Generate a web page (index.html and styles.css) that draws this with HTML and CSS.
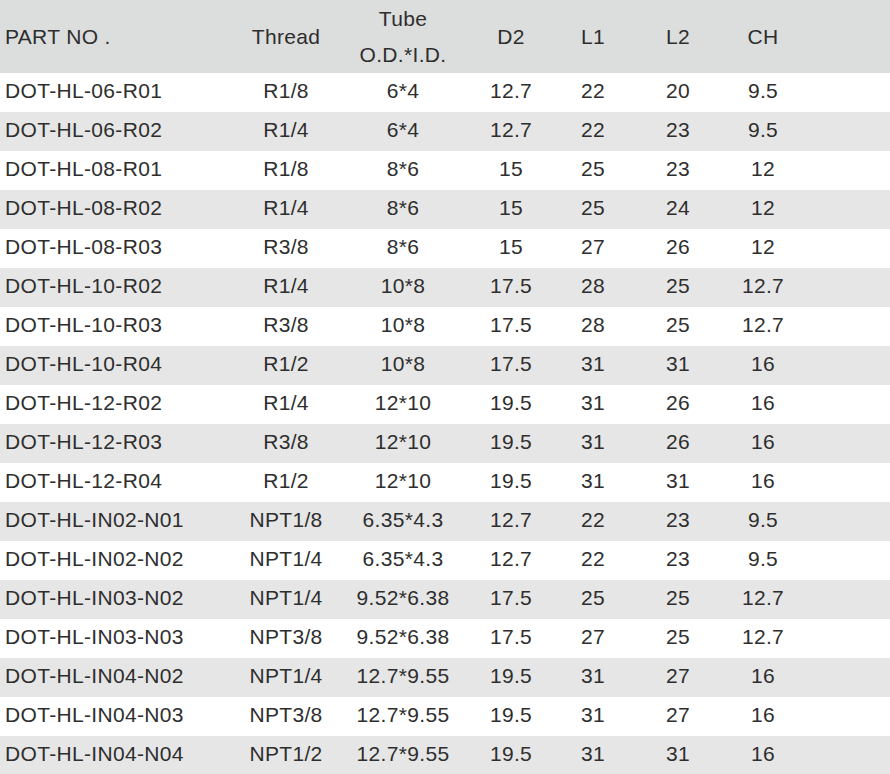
FILE: index.html
```html
<!DOCTYPE html>
<html>
<head>
<meta charset="utf-8">
<link rel="stylesheet" href="styles.css">
</head>
<body>
<table class="spec">
<colgroup>
<col class="c-part"><col class="c-thread"><col class="c-tube"><col class="c-d2"><col class="c-l1"><col class="c-l2"><col class="c-ch"><col class="c-rest">
</colgroup>
<thead>
<tr>
<th class="part">PART NO .</th><th>Thread</th><th class="tube">Tube<br>O.D.*I.D.</th><th>D2</th><th>L1</th><th>L2</th><th>CH</th><th></th>
</tr>
</thead>
<tbody>
<tr><td class="part">DOT-HL-06-R01</td><td>R1/8</td><td>6*4</td><td>12.7</td><td>22</td><td>20</td><td>9.5</td><td></td></tr>
<tr><td class="part">DOT-HL-06-R02</td><td>R1/4</td><td>6*4</td><td>12.7</td><td>22</td><td>23</td><td>9.5</td><td></td></tr>
<tr><td class="part">DOT-HL-08-R01</td><td>R1/8</td><td>8*6</td><td>15</td><td>25</td><td>23</td><td>12</td><td></td></tr>
<tr><td class="part">DOT-HL-08-R02</td><td>R1/4</td><td>8*6</td><td>15</td><td>25</td><td>24</td><td>12</td><td></td></tr>
<tr><td class="part">DOT-HL-08-R03</td><td>R3/8</td><td>8*6</td><td>15</td><td>27</td><td>26</td><td>12</td><td></td></tr>
<tr><td class="part">DOT-HL-10-R02</td><td>R1/4</td><td>10*8</td><td>17.5</td><td>28</td><td>25</td><td>12.7</td><td></td></tr>
<tr><td class="part">DOT-HL-10-R03</td><td>R3/8</td><td>10*8</td><td>17.5</td><td>28</td><td>25</td><td>12.7</td><td></td></tr>
<tr><td class="part">DOT-HL-10-R04</td><td>R1/2</td><td>10*8</td><td>17.5</td><td>31</td><td>31</td><td>16</td><td></td></tr>
<tr><td class="part">DOT-HL-12-R02</td><td>R1/4</td><td>12*10</td><td>19.5</td><td>31</td><td>26</td><td>16</td><td></td></tr>
<tr><td class="part">DOT-HL-12-R03</td><td>R3/8</td><td>12*10</td><td>19.5</td><td>31</td><td>26</td><td>16</td><td></td></tr>
<tr><td class="part">DOT-HL-12-R04</td><td>R1/2</td><td>12*10</td><td>19.5</td><td>31</td><td>31</td><td>16</td><td></td></tr>
<tr><td class="part">DOT-HL-IN02-N01</td><td>NPT1/8</td><td>6.35*4.3</td><td>12.7</td><td>22</td><td>23</td><td>9.5</td><td></td></tr>
<tr><td class="part">DOT-HL-IN02-N02</td><td>NPT1/4</td><td>6.35*4.3</td><td>12.7</td><td>22</td><td>23</td><td>9.5</td><td></td></tr>
<tr><td class="part">DOT-HL-IN03-N02</td><td>NPT1/4</td><td>9.52*6.38</td><td>17.5</td><td>25</td><td>25</td><td>12.7</td><td></td></tr>
<tr><td class="part">DOT-HL-IN03-N03</td><td>NPT3/8</td><td>9.52*6.38</td><td>17.5</td><td>27</td><td>25</td><td>12.7</td><td></td></tr>
<tr><td class="part">DOT-HL-IN04-N02</td><td>NPT1/4</td><td>12.7*9.55</td><td>19.5</td><td>31</td><td>27</td><td>16</td><td></td></tr>
<tr><td class="part">DOT-HL-IN04-N03</td><td>NPT3/8</td><td>12.7*9.55</td><td>19.5</td><td>31</td><td>27</td><td>16</td><td></td></tr>
<tr><td class="part">DOT-HL-IN04-N04</td><td>NPT1/2</td><td>12.7*9.55</td><td>19.5</td><td>31</td><td>31</td><td>16</td><td></td></tr>
</tbody>
</table>
</body>
</html>
```

FILE: styles.css
```css
html, body {
  margin: 0;
  padding: 0;
  background: #ffffff;
}

.spec {
  width: 890px;
  border-collapse: collapse;
  table-layout: fixed;
  font-family: "Liberation Sans", Arial, sans-serif;
  font-size: 21px;
  letter-spacing: 0.33px;
  color: #2e2e2e;
}

.c-part { width: 240px; }
.c-thread { width: 92px; }
.c-tube { width: 142px; }
.c-d2 { width: 74px; }
.c-l1 { width: 90px; }
.c-l2 { width: 80px; }
.c-ch { width: 90px; }
.c-rest { width: 82px; }

.spec th, .spec td {
  padding: 0;
  text-align: center;
  font-weight: normal;
  white-space: nowrap;
}

.spec thead tr {
  background: #dcdddd;
  height: 73px;
}

.spec th {
  line-height: 36px;
  vertical-align: middle;
  padding-top: 1px;
}

.spec tbody tr {
  height: 39px;
}

.spec tbody td {
  line-height: 35px;
  padding-bottom: 4px;
}

.spec tbody tr:nth-child(even) {
  background: #e6e6e6;
}

.spec .part {
  text-align: left;
  padding-left: 5px;
}
```
